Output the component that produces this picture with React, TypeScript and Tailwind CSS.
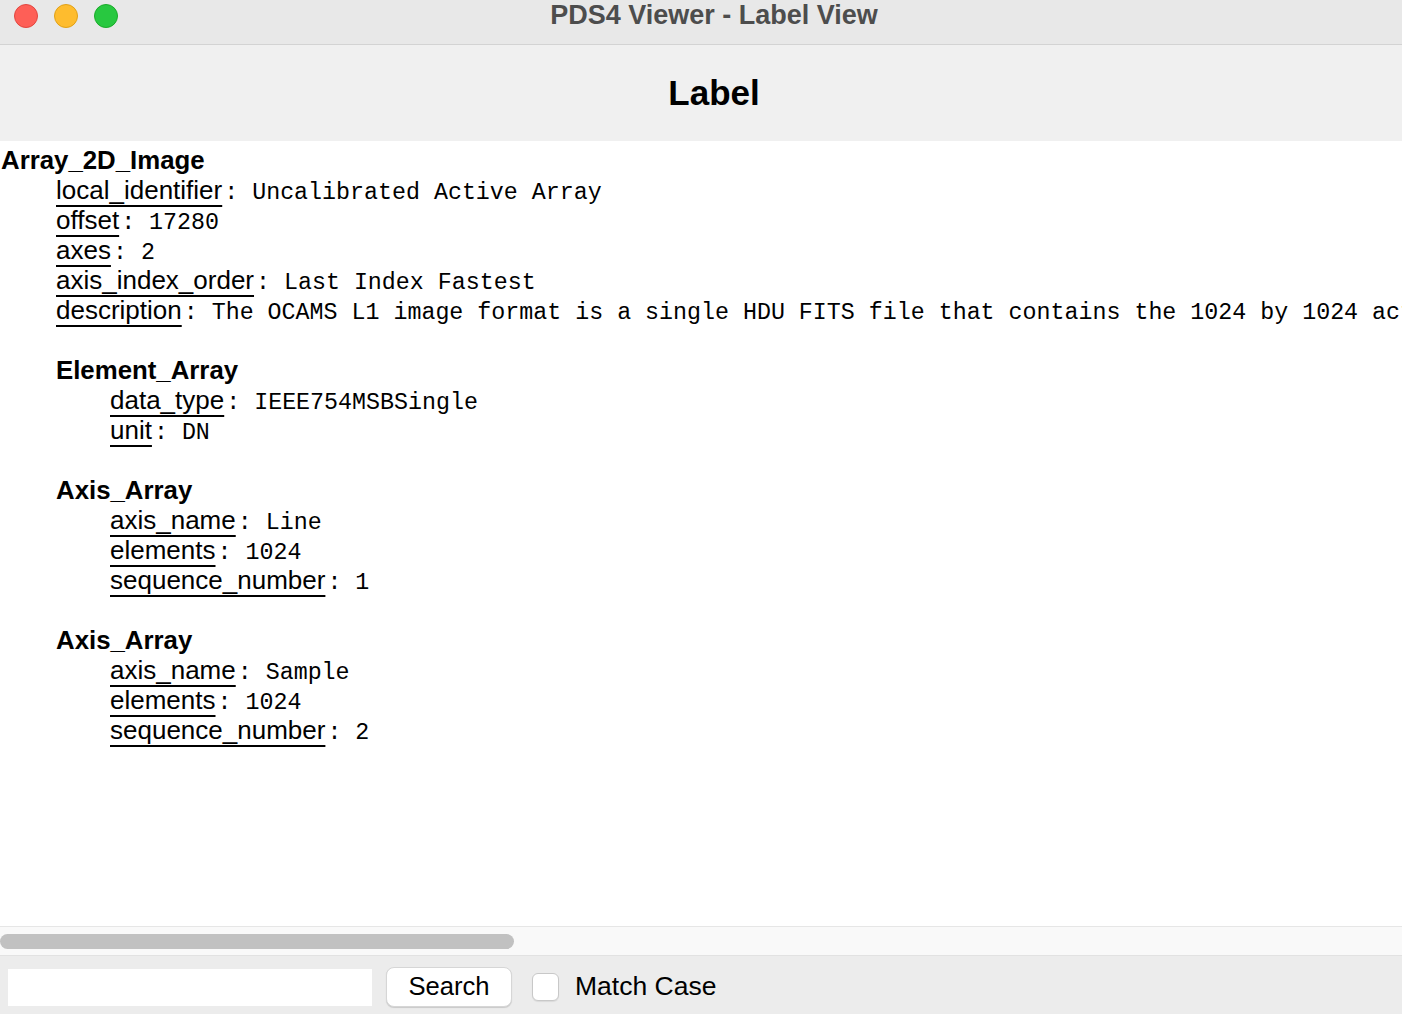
import React from 'react';

type Field = { name: string; value: string };
type Block = { title: string; fields: Field[] };

const topFields: Field[] = [
  { name: 'local_identifier', value: 'Uncalibrated Active Array' },
  { name: 'offset', value: '17280' },
  { name: 'axes', value: '2' },
  { name: 'axis_index_order', value: 'Last Index Fastest' },
  {
    name: 'description',
    value:
      'The OCAMS L1 image format is a single HDU FITS file that contains the 1024 by 1024 active array pixels of the detector.',
  },
];

const children: Block[] = [
  {
    title: 'Element_Array',
    fields: [
      { name: 'data_type', value: 'IEEE754MSBSingle' },
      { name: 'unit', value: 'DN' },
    ],
  },
  {
    title: 'Axis_Array',
    fields: [
      { name: 'axis_name', value: 'Line' },
      { name: 'elements', value: '1024' },
      { name: 'sequence_number', value: '1' },
    ],
  },
  {
    title: 'Axis_Array',
    fields: [
      { name: 'axis_name', value: 'Sample' },
      { name: 'elements', value: '1024' },
      { name: 'sequence_number', value: '2' },
    ],
  },
];

const sans = "font-['Liberation_Sans',Arial,sans-serif]";
const mono = "font-['Liberation_Mono','Courier_New',monospace]";

function Row({ field }: { field: Field }) {
  return (
    <div className="flex h-[30px] items-baseline whitespace-nowrap">
      <span
        className={`${sans} text-[26px] leading-[30px] underline underline-offset-[6px] decoration-[1.5px] [text-decoration-skip-ink:none]`}
      >
        {field.name}
      </span>
      <span className={`${mono} ml-[2px] text-[23.3px] leading-[30px] whitespace-pre`}>{': ' + field.value}</span>
    </div>
  );
}

function Heading({ children }: { children: React.ReactNode }) {
  return (
    <div className={`${sans} h-[30px] text-[25.8px] font-bold leading-[30px] whitespace-nowrap`}>{children}</div>
  );
}

export default function App() {
  return (
    <div className="flex h-[1014px] w-[1402px] flex-col overflow-hidden bg-white text-black">
      {/* window title bar */}
      <div className="relative flex h-[45px] shrink-0 items-start justify-center border-b border-[#d3d3d3] bg-[#e8e8e8]">
        <div className="absolute left-[14px] top-[4px] flex gap-[16px]">
          <span className="h-[24px] w-[24px] rounded-full border border-[#e2463f] bg-[#fe5f57]" />
          <span className="h-[24px] w-[24px] rounded-full border border-[#e1a116] bg-[#febc2e]" />
          <span className="h-[24px] w-[24px] rounded-full border border-[#1aab29] bg-[#28c840]" />
        </div>
        <span className={`${sans} ml-[26px] text-[27px] font-bold leading-[30px] text-[#4d4d4d]`}>
          PDS4 Viewer - Label View
        </span>
      </div>

      {/* header */}
      <div className="flex h-[96px] shrink-0 items-center justify-center bg-[#f0f0f0]">
        <span className={`${sans} ml-[26px] text-[35px] font-bold`}>Label</span>
      </div>

      {/* label tree */}
      <div className="flex-1 overflow-hidden pt-[4px] pl-[1px]">
        <Heading>Array_2D_Image</Heading>
        <div className="pl-[55px]">
          {topFields.map((f) => (
            <Row key={f.name} field={f} />
          ))}
          {children.map((b, i) => (
            <div key={i} className="pt-[30px]">
              <Heading>{b.title}</Heading>
              <div className="pl-[54px]">
                {b.fields.map((f) => (
                  <Row key={f.name} field={f} />
                ))}
              </div>
            </div>
          ))}
        </div>
      </div>

      {/* horizontal scrollbar */}
      <div className="flex h-[29px] shrink-0 items-center border-t border-[#e6e6e6] bg-[#f9f9f9]">
        <div className="h-[15px] w-[514px] rounded-full bg-[#c1c1c1]" />
      </div>

      {/* search bar */}
      <div className="flex h-[59px] shrink-0 items-center border-t border-[#e2e2e2] bg-[#ececec] pl-[8px] pt-[4px]">
        <div className="h-[37px] w-[364px] bg-white" />
        <button
          className={`${sans} ml-[14px] h-[40px] w-[126px] rounded-[8px] border border-[#d6d6d6] bg-white text-[25.6px] leading-none shadow-[0_1px_1px_rgba(0,0,0,0.15)]`}
        >
          Search
        </button>
        <span className="ml-[20px] h-[28px] w-[27px] rounded-[6px] border border-[#c8c8c8] bg-white shadow-[0_1px_1px_rgba(0,0,0,0.08)]" />
        <span className={`${sans} ml-[16px] text-[26.5px]`}>Match Case</span>
      </div>
    </div>
  );
}
